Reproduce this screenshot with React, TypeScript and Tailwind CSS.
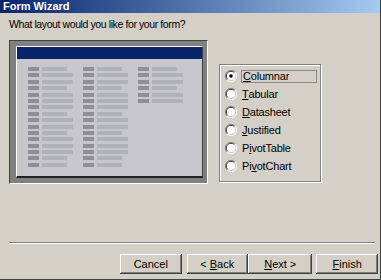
const font = { fontFamily: '"Liberation Sans", Arial, sans-serif' };

const col1 = [0, 1, 1, 0, 1, 1, 1, 0, 1, 1, 0, 1, 1, 1, 0, 0];
const col3 = [0, 1, 1, 0, 1, 1];

function PreviewColumn({ rows }: { rows: number[] }) {
  return (
    <div className="flex flex-col gap-[2.4px]">
      {rows.map((long, i) => (
        <div key={i} className="flex h-[4px] items-center gap-[3px]">
          <div className="h-[4px] w-[11px] bg-[#8e8e94]" />
          <div className={`h-[4px] bg-[#b1b1b8] ${long ? "w-[31px]" : "w-[25px]"}`} />
        </div>
      ))}
    </div>
  );
}

function Radio({ checked }: { checked?: boolean }) {
  return (
    <svg width="12" height="12" viewBox="0 0 12 12" className="shrink-0">
      <path d="M10 2 A5.5 5.5 0 0 0 2 10" fill="none" stroke="#808080" strokeWidth="1" />
      <path d="M9.3 2.7 A4.5 4.5 0 0 0 2.7 9.3" fill="none" stroke="#404040" strokeWidth="1" />
      <path d="M2 10 A5.5 5.5 0 0 0 10 2" fill="none" stroke="#ffffff" strokeWidth="1" />
      <path d="M2.7 9.3 A4.5 4.5 0 0 0 9.3 2.7" fill="none" stroke="#d4d0c8" strokeWidth="1" />
      <circle cx="6" cy="6" r="4" fill="#ffffff" />
      {checked && <circle cx="6" cy="6" r="1.8" fill="#000000" />}
    </svg>
  );
}

const options: { pre: string; key: string; post: string }[] = [
  { pre: "", key: "C", post: "olumnar" },
  { pre: "", key: "T", post: "abular" },
  { pre: "", key: "D", post: "atasheet" },
  { pre: "", key: "J", post: "ustified" },
  { pre: "P", key: "i", post: "votTable" },
  { pre: "Pi", key: "v", post: "otChart" },
];

function Button({ pre = "", k, post = "", className = "" }: { pre?: string; k?: string; post?: string; className?: string }) {
  return (
    <button
      type="button"
      className={`block h-[20px] w-[62px] bg-[#d4d0c8] text-center text-[11px] leading-[20px] whitespace-pre text-black shadow-[inset_-1px_-1px_0_#404040,inset_1px_1px_0_#ffffff,inset_-2px_-2px_0_#808080] ${className}`}
    >
      <span>
        {pre}
        {k && <span className="underline underline-offset-1">{k}</span>}
        {post}
      </span>
    </button>
  );
}

export default function App() {
  return (
    <div className="flex h-[280px] w-[381px] flex-col border-r border-b border-[#404040] bg-[#d4d0c8]" style={font}>
      <div className="flex h-[13px] items-center bg-gradient-to-r from-[#0a246a] to-[#a6caf0] pl-[3px] text-[11px] font-bold text-white">
        Form Wizard
      </div>
      <div className="flex flex-1 flex-col pl-[9px]">
        <p className="mt-[5px] text-[10.5px] leading-[13px] tracking-[-0.4px] text-black">
          What layout would you like for your form?
        </p>
        <div className="mt-[9px] flex items-start">
          <div className="h-[144px] w-[199px] border-t border-l border-[#404040] border-b border-r border-b-white border-r-white bg-[#808080] pt-[5px] pl-[6px] pr-[4px] pb-[5px]">
            <div className="flex h-full flex-col border-t border-l border-white border-b-2 border-r border-b-[#202020] border-r-[#404040] bg-[#c6c6cc]">
              <div className="h-[12px] bg-[#0a246a]" />
              <div className="flex gap-[10px] pt-[8px] pl-[11px]">
                <PreviewColumn rows={col1} />
                <PreviewColumn rows={col1} />
                <PreviewColumn rows={col3} />
              </div>
            </div>
          </div>
          <div className="mt-[24px] ml-[11px] flex h-[118px] w-[102px] flex-col gap-[6px] border border-[#808080] pt-[5px] pl-[5px] shadow-[1px_1px_0_#ffffff,inset_1px_1px_0_#ffffff]">
            {options.map((o, i) => (
              <div key={i} className="flex h-[12px] items-center gap-[4px]">
                <Radio checked={i === 0} />
                <span
                  className={`flex h-[13px] items-center pl-[1px] text-[11px] tracking-[-0.2px] text-black ${i === 0 ? "w-[76px] border border-[#8a8a8a]" : ""}`}
                >
                  {o.pre}
                  <span className="underline underline-offset-1">{o.key}</span>
                  {o.post}
                </span>
              </div>
            ))}
          </div>
        </div>
        <div className="mt-[58px] mr-[5px] h-[2px] border-t border-[#808080] border-b border-b-white" />
        <div className="mt-[10px] flex pr-[2px] pl-[111px]">
          <Button pre="Cancel" />
          <Button pre="< " k="B" post="ack" className="ml-[5px]" />
          <Button k="N" post="ext >" className="w-[65px]" />
          <Button k="F" post="inish" className="ml-[4px]" />
        </div>
      </div>
    </div>
  );
}
